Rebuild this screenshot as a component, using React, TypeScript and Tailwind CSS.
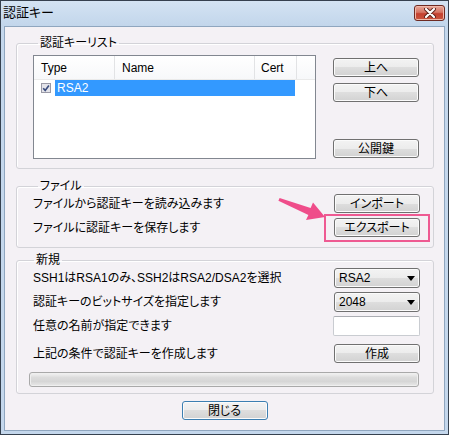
import type { ReactNode } from "react";

const face =
  "[font-family:'Liberation_Sans','Noto_Sans_CJK_JP',sans-serif] [font-feature-settings:'palt'] text-[12px] text-black";

function Btn({ children, primary }: { children: ReactNode; primary?: boolean }) {
  return (
    <button
      type="button"
      className={
        "flex h-[19px] w-[86px] items-center justify-center rounded-[3px] border bg-[linear-gradient(to_bottom,#f3f3f3_0%,#ececec_50%,#dedede_50%,#d2d2d2_100%)] leading-none shadow-[inset_0_0_0_1px_#fbfbfb] " +
        (primary ? "border-[#3c7fb1]" : "border-[#707070]")
      }
    >
      {children}
    </button>
  );
}

function Combo({ value }: { value: string }) {
  return (
    <div className="flex h-[20px] w-[86px] items-center justify-between rounded-[3px] border border-[#707070] bg-[linear-gradient(to_bottom,#f3f3f3_0%,#ececec_50%,#dedede_50%,#d2d2d2_100%)] pl-[4px] pr-[4px] leading-none shadow-[inset_0_0_0_1px_#fbfbfb]">
      <span>{value}</span>
      <svg width="8" height="5" viewBox="0 0 8 5">
        <polygon points="0,0 8,0 4,5" fill="#000" />
      </svg>
    </div>
  );
}

function Group({ title, children, className }: { title: string; children: ReactNode; className: string }) {
  return (
    <fieldset className={"ml-[11px] mr-[10px] rounded-[3px] border border-[#d3d3d8] shadow-[inset_1px_1px_0_#ffffff] " + className}>
      <legend className="ml-[5px] px-[2px] leading-[14px]">{title}</legend>
      {children}
    </fieldset>
  );
}

function CheckMark() {
  return (
    <svg width="10" height="10" viewBox="0 0 10 10">
      <rect x="0.5" y="0.5" width="9" height="9" fill="#e4e4ea" stroke="#9a9aa6" />
      <path d="M2.2 5.2 L4.2 7.4 L7.9 2.4" fill="none" stroke="#3a4c7e" strokeWidth="1.6" />
    </svg>
  );
}

export default function App() {
  return (
    <div className={"relative h-[435px] w-[449px] bg-white " + face}>
      <div className="flex h-[435px] w-[449px] flex-col border border-[#36414f] bg-[#c4d7ec]">
        {/* title bar */}
        <div className="flex h-[25px] items-start justify-between bg-[linear-gradient(to_bottom,#d4e3f3,#c2d6eb)]">
          <span className="ml-[2px] mt-[4px] text-[13px] leading-[16px]">認証キー</span>
          <div className="mr-[3px] mt-[4px] flex h-[16px] w-[31px] items-center justify-center rounded-[3px] border border-[#6e2a22] bg-[linear-gradient(to_bottom,#e7a898_0%,#d57464_45%,#c4402f_55%,#c9553f_100%)] shadow-[inset_0_0_0_1px_#efb9ab]">
            <svg width="12" height="10" viewBox="0 0 12 10">
              <path d="M2 1 L10 9 M10 1 L2 9" stroke="#5a2019" strokeWidth="4" strokeLinecap="round" />
              <path d="M2 1 L10 9 M10 1 L2 9" stroke="#ffffff" strokeWidth="2.2" strokeLinecap="round" />
            </svg>
          </div>
        </div>

        {/* client area */}
        <div className="mx-[3px] mb-[3px] flex flex-1 flex-col border border-[#8fa6bf] bg-[#f4f1f5]">
          <Group title="認証キーリスト" className="mt-[9px] pb-[9px] pl-[16px] pr-[13px] pt-[5px]">
            <div className="flex gap-[17px]">
              <div className="flex h-[104px] w-[283px] flex-col border border-[#828790] bg-white">
                <div className="flex h-[24px] border-b border-[#eaeaea] bg-[linear-gradient(to_bottom,#ffffff,#f7f8fa)]">
                  <div className="flex w-[81px] items-center border-r border-[#e2e3e5] pl-[7px]">Type</div>
                  <div className="flex w-[140px] items-center border-r border-[#e2e3e5] pl-[7px]">Name</div>
                  <div className="flex w-[42px] items-center border-r border-[#e2e3e5] pl-[6px]">Cert</div>
                  <div className="flex-1" />
                </div>
                <div className="flex h-[16px] items-center pl-[7px]">
                  <CheckMark />
                  <div className="ml-[4px] flex h-[16px] w-[240px] items-center bg-[#3399ff] pl-[2px] text-white">RSA2</div>
                </div>
              </div>
              <div className="flex flex-col pb-[1px] pt-[3px]">
                <Btn>上へ</Btn>
                <div className="mt-[6px]">
                  <Btn>下へ</Btn>
                </div>
                <div className="mt-auto">
                  <Btn>公開鍵</Btn>
                </div>
              </div>
            </div>
          </Group>

          <Group title="ファイル" className="mt-[10px] pb-[10px] pl-[16px] pr-[13px] pt-[1px]">
            <div className="flex items-center justify-between">
              <span>ファイルから認証キーを読み込みます</span>
              <Btn>インポート</Btn>
            </div>
            <div className="mt-[5px] flex items-center justify-between">
              <span>ファイルに認証キーを保存します</span>
              <div className="relative">
                <Btn>エクスポート</Btn>
                <span className="absolute -bottom-[5px] -left-[10px] -right-[10px] -top-[4px] border-2 border-[#ee5a92]" />
              </div>
            </div>
          </Group>

          <Group title="新規" className="mt-[5px] pb-[6px] pl-[12px] pr-[13px] pt-[1px]">
            <div className="flex flex-col pl-[4px]">
              <div className="flex items-center justify-between">
                <span>SSH1はRSA1のみ、SSH2はRSA2/DSA2を選択</span>
                <Combo value="RSA2" />
              </div>
              <div className="mt-[4px] flex items-center justify-between">
                <span>認証キーのビットサイズを指定します</span>
                <Combo value="2048" />
              </div>
              <div className="mt-[4px] flex items-center justify-between">
                <span>任意の名前が指定できます</span>
                <div className="h-[20px] w-[87px] rounded-[2px] border border-[#c9ccd1] border-t-[#abadb3] bg-white" />
              </div>
              <div className="mt-[8px] flex items-center justify-between">
                <span>上記の条件で認証キーを作成します</span>
                <Btn>作成</Btn>
              </div>
            </div>
            <div className="mt-[9px] h-[15px] w-[390px] rounded-[3px] border border-[#a9a9a9] bg-[linear-gradient(to_bottom,#f4f4f4_0%,#dcdcdc_35%,#d6d6d6_65%,#e9e9e9_100%)] shadow-[inset_0_0_0_1px_#efefef]" />
          </Group>

          <div className="mt-[7px] flex justify-center">
            <Btn primary>閉じる</Btn>
          </div>
        </div>
      </div>

      {/* annotation arrow */}
      <svg className="absolute left-[270px] top-[190px]" width="60" height="35" viewBox="0 0 60 35">
        <polygon
          points="9.6,8 8.4,10.8 38.4,25 36,30 55,27 43,12.5 40.6,18"
          fill="#ef4d8a"
        />
      </svg>
    </div>
  );
}
